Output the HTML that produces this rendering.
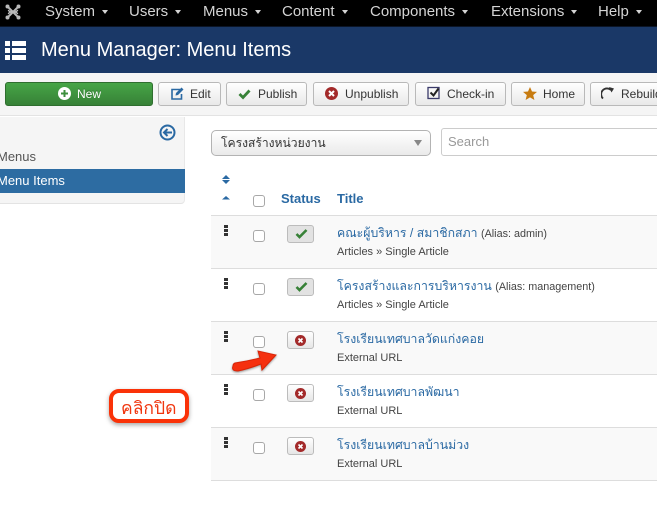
<!DOCTYPE html>
<html><head><meta charset="utf-8">
<style>
*{box-sizing:border-box}
html,body{margin:0;padding:0;width:657px;height:529px;overflow:hidden;background:#fff;font-family:"Liberation Sans","DejaVu Sans",sans-serif}
.a{position:absolute;white-space:nowrap}
#nav{left:0;top:0;width:657px;height:27px;background:#000;border-bottom:1px solid #0b1526}
.n{position:absolute;top:2px;font-size:15px;line-height:20px;color:#d4d4d4;white-space:nowrap}
.n:after{content:"";display:inline-block;margin-left:7px;vertical-align:middle;border-top:4px solid #d4d4d4;border-left:3.5px solid transparent;border-right:3.5px solid transparent}
#head{left:0;top:27px;width:657px;height:46px;background:#1a3867}
#tb{left:0;top:73px;width:657px;height:43px;background:#f5f5f5;border-bottom:1px solid #e3e3e3}
.btn{position:absolute;top:82px;height:24px;border:1px solid #b9b9b9;border-radius:3px;background:linear-gradient(#fff,#e9e9e9);font-size:12px;line-height:22px;color:#333;white-space:nowrap}
.btn span{position:absolute;top:0}
.btn svg{position:absolute}
.rw{position:absolute;left:211px;width:446px;height:53px;border-bottom:1px solid #ddd}
.t{position:absolute;left:126px;top:7px;font-size:12.3px;line-height:20px;color:#2a69a3;white-space:nowrap}
.al{font-size:10.8px;color:#444}
.s{position:absolute;left:126px;top:27px;font-size:11px;line-height:18px;color:#444;white-space:nowrap}
.cb{position:absolute;left:42px;top:14px;width:12px;height:12px;border:1px solid #a8a8a8;border-radius:3px;background:#fff}
.st{position:absolute;left:76px;top:9px;width:27px;height:18px;border:1px solid #bcbcbc;border-radius:3px;background:linear-gradient(#fff,#e6e6e6)}
.st.on{background:#e2e2e2}
.gr{position:absolute;left:13px;top:9px;width:4px;height:12px;background:repeating-linear-gradient(#333 0,#333 3px,transparent 3px,transparent 4px)}
</style></head><body>
<div class="a" id="nav"></div>
<svg class="a" style="left:4px;top:3px" width="18" height="18" viewBox="0 0 18 18"><g stroke="#b8b8b8" fill="none" stroke-linecap="round"><path d="M4 4L14 14M14 4L4 14" stroke-width="2"/><path d="M4.500 7.500Q9 12 13.500 7.500M4.500 10.500Q9 6 13.500 10.500" stroke-width="1.400"/></g><g fill="#b8b8b8"><circle cx="3.500" cy="3.500" r="2"/><circle cx="14.500" cy="3.500" r="2"/><circle cx="3.500" cy="14.500" r="2"/><circle cx="14.500" cy="14.500" r="2"/></g></svg>
<div class="n" style="left:45px">System</div>
<div class="n" style="left:129px">Users</div>
<div class="n" style="left:203px">Menus</div>
<div class="n" style="left:282px">Content</div>
<div class="n" style="left:370px">Components</div>
<div class="n" style="left:491px">Extensions</div>
<div class="n" style="left:598px">Help</div>

<div class="a" id="head"></div>
<svg class="a" style="left:5px;top:40px" width="21" height="21" viewBox="0 0 21 21" fill="#fff"><rect x="0" y="1" width="5" height="5"/><rect x="7" y="1" width="14" height="5"/><rect x="0" y="8" width="5" height="5"/><rect x="7" y="8" width="14" height="5"/><rect x="0" y="15" width="5" height="5"/><rect x="7" y="15" width="14" height="5"/></svg>
<div class="a" style="left:41px;top:38px;font-size:20px;line-height:24px;color:#fff">Menu Manager: Menu Items</div>

<div class="a" id="tb"></div>
<div class="btn" style="left:5px;width:148px;background:linear-gradient(#46a546,#378137);border-color:#2f6e2f;color:#fff">
<svg style="left:52px;top:4px" width="13" height="13" viewBox="0 0 13 13"><circle cx="6.500" cy="6.500" r="6.500" fill="#fff"/><path d="M6.500 3v7M3 6.500h7" stroke="#3c8f3c" stroke-width="2"/></svg>
<span style="left:71px;color:#fff;text-shadow:0 -1px 0 rgba(0,0,0,.25)">New</span></div>
<div class="btn" style="left:158px;width:63px">
<svg style="left:11px;top:4px" width="14" height="14" viewBox="0 0 14 14" fill="none"><path d="M10 2.500H2v9.500h9.500V7" stroke="#2a69a3" stroke-width="1.600"/><path d="M5.500 8.500L6 6l5.500-5.500 2 2L8 8z" fill="#2a69a3"/></svg>
<span style="left:31px">Edit</span></div>
<div class="btn" style="left:226px;width:81px">
<svg style="left:11px;top:5px" width="13" height="12" viewBox="0 0 13 12"><path d="M1.500 6l3.500 3.500 6.500-7" fill="none" stroke="#378137" stroke-width="2.800"/></svg>
<span style="left:31px">Publish</span></div>
<div class="btn" style="left:313px;width:96px">
<svg style="left:11px;top:4px" width="13" height="13" viewBox="0 0 13 13"><circle cx="6.500" cy="6.500" r="6.500" fill="#a32a2a"/><path d="M4 4l5 5M9 4l-5 5" stroke="#fff" stroke-width="2"/></svg>
<span style="left:31px">Unpublish</span></div>
<div class="btn" style="left:415px;width:91px">
<svg style="left:11px;top:3px" width="14" height="14" viewBox="0 0 14 14" fill="none"><rect x="1" y="1.500" width="11" height="11" stroke="#3a3a6a" stroke-width="1.300"/><path d="M3.500 6.500l3 3 5-7" stroke="#222" stroke-width="2"/></svg>
<span style="left:31px">Check-in</span></div>
<div class="btn" style="left:511px;width:74px">
<svg style="left:11px;top:4px" width="14" height="13" viewBox="0 0 14 13"><path d="M7 0l2 4.500 5 .4-3.800 3.200 1.200 4.900L7 10.400 2.600 13l1.200-4.900L0 4.900l5-.4z" fill="#c77b10"/></svg>
<span style="left:31px">Home</span></div>
<div class="btn" style="left:590px;width:80px">
<svg style="left:10px;top:4px" width="14" height="14" viewBox="0 0 14 14" fill="none"><path d="M2 11.500A5.500 5.500 0 0 1 10 3" stroke="#333" stroke-width="1.800"/><path d="M8 0l5 1.500-2.500 4z" fill="#333"/></svg>
<span style="left:30px">Rebuild</span></div>

<div class="a" style="left:0;top:117px;width:185px;height:87px;background:#f5f5f5;border-bottom:1px solid #e3e3e3;border-right:1px solid #e8e8e8;border-radius:0 0 4px 0"></div>
<svg class="a" style="left:159px;top:124px" width="17" height="17" viewBox="0 0 17 17" fill="none"><circle cx="8.500" cy="8.500" r="7" stroke="#2a69a3" stroke-width="2"/><path d="M13 8.500H6M8.500 5L5 8.500 8.500 12" stroke="#2a69a3" stroke-width="2"/></svg>
<div class="a" style="left:-3px;top:147px;font-size:13px;line-height:20px;color:#555">Menus</div>
<div class="a" style="left:0;top:169px;width:185px;height:24px;background:#2d6ca2"></div>
<div class="a" style="left:-3px;top:171px;font-size:13px;line-height:20px;color:#fff">Menu Items</div>

<div class="a" style="left:211px;top:130px;width:220px;height:26px;border:1px solid #b3b3b3;border-radius:5px;background:linear-gradient(#fff,#eaeaea)"></div>
<div class="a" style="left:221px;top:133px;font-size:12.100px;line-height:20px;color:#333">โครงสร้างหน่วยงาน</div>
<div class="a" style="left:414px;top:140px;width:0;height:0;border-top:6px solid #888;border-left:4px solid transparent;border-right:4px solid transparent"></div>
<div class="a" style="left:441px;top:128px;width:230px;height:28px;border:1px solid #ccc;border-radius:3px;background:#fff;font-size:13px;line-height:25px;color:#999;padding-left:6px">Search</div>

<svg class="a" style="left:221px;top:175px" width="10" height="30" viewBox="0 0 10 30" fill="#2a69a3"><path d="M1 4L5 0 9 4zM1 5L5 9 9 5zM1 24.500L5 21 9 24.500z"/></svg>
<div class="cb a" style="left:253px;top:195px"></div>
<div class="a" style="left:281px;top:189px;font-size:13px;line-height:20px;font-weight:700;color:#2a69a3">Status</div>
<div class="a" style="left:337px;top:189px;font-size:13px;line-height:20px;font-weight:700;color:#2a69a3">Title</div>
<div class="a" style="left:211px;top:215px;width:446px;height:1px;background:#ddd"></div>

<div class="rw" style="top:216px;background:#f9f9f9"><div class="gr"></div><div class="cb"></div>
<div class="st on"><svg style="position:absolute;left:7px;top:3px" width="13" height="10" viewBox="0 0 13 10"><path d="M1.500 5l3 3 7-7" fill="none" stroke="#378137" stroke-width="2.600"/></svg></div>
<div class="t">คณะผู้บริหาร / สมาชิกสภา <span class="al">(Alias: admin)</span></div><div class="s">Articles » Single Article</div></div>

<div class="rw" style="top:269px;background:#fff"><div class="gr"></div><div class="cb"></div>
<div class="st on"><svg style="position:absolute;left:7px;top:3px" width="13" height="10" viewBox="0 0 13 10"><path d="M1.500 5l3 3 7-7" fill="none" stroke="#378137" stroke-width="2.600"/></svg></div>
<div class="t">โครงสร้างและการบริหารงาน <span class="al">(Alias: management)</span></div><div class="s">Articles » Single Article</div></div>

<div class="rw" style="top:322px;background:#f9f9f9"><div class="gr"></div><div class="cb"></div>
<div class="st"><svg style="position:absolute;left:6px;top:2px" width="13" height="13" viewBox="0 0 13 13"><circle cx="6.500" cy="6.500" r="5.500" fill="#a32a2a"/><path d="M4.500 4.500l4 4M8.500 4.500l-4 4" stroke="#fff" stroke-width="1.600"/></svg></div>
<div class="t">โรงเรียนเทศบาลวัดแก่งคอย</div><div class="s">External URL</div></div>

<div class="rw" style="top:375px;background:#fff"><div class="gr"></div><div class="cb"></div>
<div class="st"><svg style="position:absolute;left:6px;top:2px" width="13" height="13" viewBox="0 0 13 13"><circle cx="6.500" cy="6.500" r="5.500" fill="#a32a2a"/><path d="M4.500 4.500l4 4M8.500 4.500l-4 4" stroke="#fff" stroke-width="1.600"/></svg></div>
<div class="t">โรงเรียนเทศบาลพัฒนา</div><div class="s">External URL</div></div>

<div class="rw" style="top:428px;background:#f9f9f9"><div class="gr"></div><div class="cb"></div>
<div class="st"><svg style="position:absolute;left:6px;top:2px" width="13" height="13" viewBox="0 0 13 13"><circle cx="6.500" cy="6.500" r="5.500" fill="#a32a2a"/><path d="M4.500 4.500l4 4M8.500 4.500l-4 4" stroke="#fff" stroke-width="1.600"/></svg></div>
<div class="t">โรงเรียนเทศบาลบ้านม่วง</div><div class="s">External URL</div></div>

<svg class="a" style="left:228px;top:346px" width="54" height="32" viewBox="0 0 54 32"><path d="M7 17Q20 15 32 12L30 5 48 9 34 24 33 18Q20 23 10 25Q3 25 5 20Q5 18 7 17z" fill="#f5300f" stroke="#d82408" stroke-width="1" style="filter:drop-shadow(0 1px 1px rgba(0,0,0,.4))"/></svg>

<div class="a" style="left:109px;top:389px;width:80px;height:34px;border:4px solid #fa3208;border-radius:10px;background:#fff;box-shadow:0 2px 5px rgba(0,0,0,.35)"></div>
<div class="a" style="left:121px;top:397px;font-size:17.500px;line-height:22px;color:#f0360f">คลิกปิด</div>
</body></html>
